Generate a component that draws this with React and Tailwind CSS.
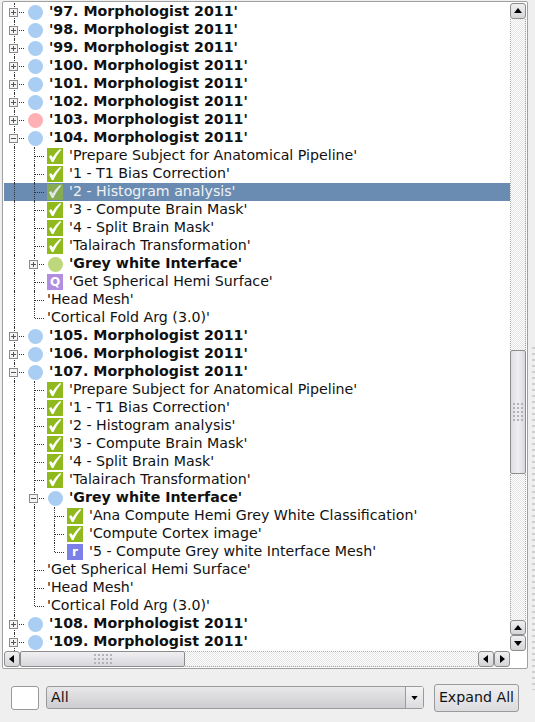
const FONT = "font-['DejaVu_Sans',sans-serif]";

const pipelineSteps = ["'Prepare Subject for Anatomical Pipeline'", "'1 - T1 Bias Correction'", "'2 - Histogram analysis'", "'3 - Compute Brain Mask'", "'4 - Split Brain Mask'", "'Talairach Transformation'"];

const rows = [
  ...[97, 98, 99, 100, 101, 102].map((n) => ({ level: 0, exp: "+", icon: "blue", bold: true, text: `'${n}. Morphologist 2011'` })),
  { level: 0, exp: "+", icon: "red", bold: true, text: "'103. Morphologist 2011'" },
  { level: 0, exp: "-", icon: "blue", bold: true, text: "'104. Morphologist 2011'" },
  ...pipelineSteps.map((t, i) => ({ level: 1, icon: "check", text: t, selected: i === 2 })),
  { level: 1, exp: "+", icon: "green", bold: true, text: "'Grey white Interface'" },
  { level: 1, icon: "q", text: "'Get Spherical Hemi Surface'" },
  { level: 1, text: "'Head Mesh'" },
  { level: 1, text: "'Cortical Fold Arg (3.0)'" },
  { level: 0, exp: "+", icon: "blue", bold: true, text: "'105. Morphologist 2011'" },
  { level: 0, exp: "+", icon: "blue", bold: true, text: "'106. Morphologist 2011'" },
  { level: 0, exp: "-", icon: "blue", bold: true, text: "'107. Morphologist 2011'" },
  ...pipelineSteps.map((t) => ({ level: 1, icon: "check", text: t })),
  { level: 1, exp: "-", icon: "blue", bold: true, text: "'Grey white Interface'" },
  { level: 2, icon: "check", text: "'Ana Compute Hemi Grey White Classification'" },
  { level: 2, icon: "check", text: "'Compute Cortex image'" },
  { level: 2, icon: "r", text: "'5 - Compute Grey white Interface Mesh'", last: true },
  { level: 1, text: "'Get Spherical Hemi Surface'" },
  { level: 1, text: "'Head Mesh'" },
  { level: 1, text: "'Cortical Fold Arg (3.0)'" },
  { level: 0, exp: "+", icon: "blue", bold: true, text: "'108. Morphologist 2011'" },
  { level: 0, exp: "+", icon: "blue", bold: true, text: "'109. Morphologist 2011'" },
];

function Guide({ mode, exp }) {
  return (
    <div className="relative w-5 h-[18px] shrink-0">
      {mode !== "none" && (
        <div className={`absolute left-[10px] top-0 border-l border-dotted border-[#333] ${mode === "last" ? "h-[9px]" : "h-[18px]"}`} />
      )}
      {mode !== "through" && mode !== "none" && (
        <div className="absolute left-[11px] top-[9px] w-[9px] border-t border-dotted border-[#333]" />
      )}
      {exp && (
        <div className="absolute left-[5px] top-[5px] w-[9px] h-[9px] border border-[#8a8a8a] bg-[#f4f4f4] flex items-center justify-center">
          <div className="relative w-[5px] h-[5px]">
            <div className="absolute left-0 top-[2px] w-[5px] h-px bg-[#555]" />
            {exp === "+" && <div className="absolute left-[2px] top-0 w-px h-[5px] bg-[#555]" />}
          </div>
        </div>
      )}
    </div>
  );
}

function NodeIcon({ icon, selected }) {
  if (icon === "blue" || icon === "red" || icon === "green") {
    const color = { blue: "bg-[#a9cdf3]", red: "bg-[#ffb0b5]", green: "bg-[#bdd87c]" }[icon];
    return <div className={`w-[15px] h-[15px] ml-1 rounded-full shrink-0 ${color}`} />;
  }
  if (icon === "check") {
    return (
      <div className={`w-4 h-4 ml-[3px] shrink-0 ${selected ? "bg-[#85ac55]" : "bg-[#8fb91d]"}`}>
        <svg viewBox="0 0 16 16" className="w-4 h-4">
          <path d="M2 8.5 L4 7 L5.8 9.6 C7.5 6.5 10 3.5 13 1 L14.3 1.8 C11 5.5 8.2 10 6.5 14 L4.8 14 Z" fill={selected ? "#dfe8e6" : "#fff"} />
        </svg>
      </div>
    );
  }
  if (icon === "q") {
    return <div className="w-4 h-4 ml-[3px] shrink-0 bg-[#b18ee0] text-white font-bold text-[12px] leading-4 text-center">Q</div>;
  }
  if (icon === "r") {
    return <div className="w-4 h-4 ml-[3px] shrink-0 bg-[#7a80e8] text-white font-bold text-[12px] leading-4 text-center">r</div>;
  }
  return null;
}

function guidesFor(row, i) {
  const guides = [];
  for (let col = 0; col <= row.level; col++) {
    const isOwn = col === row.level;
    if (col === 0) {
      guides.push(isOwn ? "branch" : "through");
    } else if (col === 1) {
      let open = false;
      for (let j = i + 1; j < rows.length && rows[j].level >= 1; j++) {
        if (rows[j].level === 1) open = true;
      }
      if (isOwn) guides.push(open ? "branch" : "last");
      else guides.push(open ? "through" : "none");
    } else {
      guides.push(row.last ? "last" : "branch");
    }
  }
  return guides;
}

function Row({ row, index }) {
  const guides = guidesFor(row, index);
  return (
    <div className={`flex items-center h-[18px] ${row.selected ? "bg-[#6a8cb3] text-[#f0f2f4]" : "text-[#111]"}`}>
      {guides.map((g, i) => (
        <Guide key={i} mode={g} exp={i === guides.length - 1 ? row.exp : undefined} />
      ))}
      {row.icon && <div className="mr-[6px]"><NodeIcon icon={row.icon} selected={row.selected} /></div>}
      <span className={`text-[14.2px] leading-[16px] pb-[2px] whitespace-nowrap ${row.icon ? "" : "ml-[3px]"} ${row.bold ? "font-bold" : ""}`}>{row.text}</span>
    </div>
  );
}

function ArrowButton({ dir, className = "" }) {
  const shape = {
    up: "M1 7 L5 2 L9 7 Z",
    down: "M1 3 L5 8 L9 3 Z",
    left: "M7 1 L2 5 L7 9 Z",
    right: "M3 1 L8 5 L3 9 Z",
  }[dir];
  return (
    <div className={`flex items-center justify-center border border-[#8c8c8c] rounded-[3px] bg-gradient-to-b from-[#f0f0f2] to-[#d5d5d9] ${className}`}>
      <svg viewBox="0 0 10 10" className="w-[10px] h-[10px]"><path d={shape} fill="#000" /></svg>
    </div>
  );
}

function Grip({ cols = 4, rows: gripRows = 5 }) {
  return (
    <div className="grid gap-[2px]" style={{ gridTemplateColumns: `repeat(${cols}, 2px)` }}>
      {Array.from({ length: cols * gripRows }).map((_, i) => (
        <div key={i} className="w-[2px] h-[2px] bg-[#b4b4b8]" />
      ))}
    </div>
  );
}

const track = "bg-[repeating-conic-gradient(#e4e4e4_0_25%,#ffffff_0_50%)] bg-[length:2px_2px]";

export default function App() {
  return (
    <div className={`relative w-[535px] h-[722px] bg-[#efefef] overflow-hidden ${FONT}`}>
      <div className="pl-[2px] pt-px w-[528px]">
        <div className="h-[668px] border border-[#a0a0a0] rounded-[2px] bg-white p-px flex flex-col">
          <div className="flex h-[648px]">
            <div className="w-[506px] overflow-hidden h-[648px]">
              {rows.map((row, i) => <Row key={i} row={row} index={i} />)}
            </div>
            {/* vertical scrollbar */}
            <div className="w-[16px] flex flex-col">
              <ArrowButton dir="up" className="h-[16px] shrink-0" />
              <div className={`h-[331px] shrink-0 border-x border-dotted border-[#aaa] ${track}`} />
              <div className="h-[124px] shrink-0 border border-[#8c8c8c] rounded-[2px] bg-gradient-to-r from-[#dedee2] via-[#f0f0f3] to-[#dadade] flex items-center justify-center">
                <Grip cols={3} rows={5} />
              </div>
              <div className={`flex-1 border-x border-dotted border-[#aaa] ${track}`} />
              <ArrowButton dir="up" className="h-[15px] shrink-0" />
              <ArrowButton dir="down" className="h-[16px] shrink-0" />
            </div>
          </div>
          {/* horizontal scrollbar */}
          <div className="flex h-[16px] mr-[16px]">
            <ArrowButton dir="left" className="w-[16px] shrink-0" />
            <div className="w-[165px] shrink-0 border border-[#8c8c8c] rounded-[2px] bg-gradient-to-b from-[#f0f0f3] to-[#d8d8dc] flex items-center justify-center">
              <Grip cols={5} rows={3} />
            </div>
            <div className={`flex-1 border-y border-dotted border-[#aaa] ${track}`} />
            <ArrowButton dir="left" className="w-[16px] shrink-0" />
            <ArrowButton dir="right" className="w-[16px] shrink-0" />
          </div>
        </div>
      </div>

      {/* bottom controls */}
      <div className="flex items-center pl-[11px] mt-[15px] h-[27px]">
        <div className="w-[28px] h-[24px] bg-white border border-[#9a9a9a] rounded-[3px] shrink-0" />
        <div className="ml-[7px] w-[378px] h-[23px] border border-[#9a9a9a] rounded-[3px] bg-gradient-to-b from-[#e8e8ea] to-[#cdcdd1] flex items-center shrink-0">
          <span className="flex-1 pl-[4px] text-[14.2px] leading-[16px] pb-[2px] text-[#111]">All</span>
          <div className="w-[18px] h-full border-l border-[#9a9a9a] flex items-center justify-center bg-gradient-to-b from-[#f4f4f5] to-[#dcdcdf]">
            <svg viewBox="0 0 8 5" className="w-[7px] h-[4px]"><path d="M0 0 H8 L4 5 Z" fill="#000" /></svg>
          </div>
        </div>
        <div className="ml-[10px] w-[85px] h-[28px] border border-[#9a9a9a] rounded-[3px] bg-gradient-to-b from-[#f0f0f1] to-[#dcdcdf] flex items-center justify-center text-[14.2px] leading-[16px] pb-[2px] text-[#111] shrink-0">
          Expand All
        </div>
      </div>

      {/* window resize grip */}
      <div className="absolute right-0 top-[347px] h-[343px] w-[3px] bg-[repeating-linear-gradient(to_bottom,#cfcfcf_0_2px,#efefef_2px_6px)]" />
    </div>
  );
}
